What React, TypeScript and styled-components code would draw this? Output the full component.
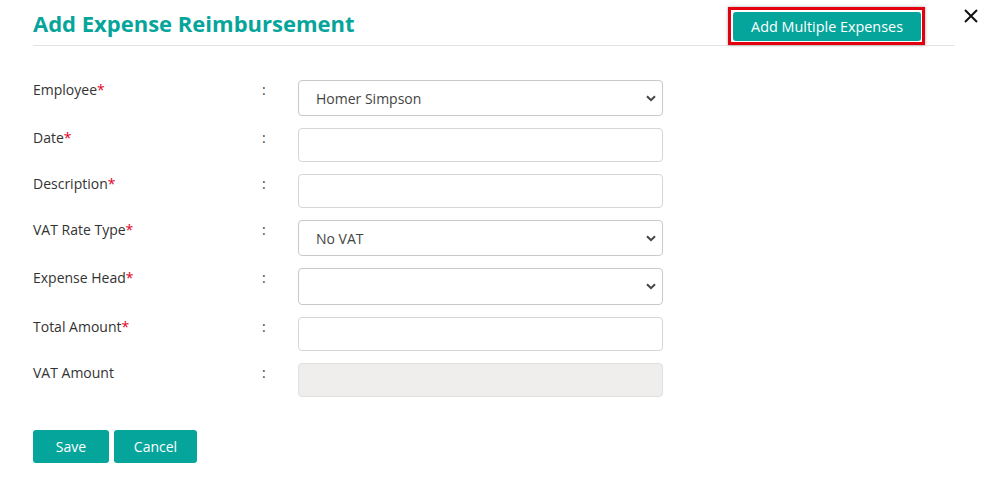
import * as React from "react";
import styled, { createGlobalStyle } from "styled-components";

const teal = "#06a59c";

const GlobalStyle = createGlobalStyle`
    body {
        margin: 0;
        background: #fff;
        font-family: "Open Sans", "Liberation Sans", sans-serif;
        color: #333;
    }
`

const CModal = styled.div`
    padding: 0 0 0 33px;
`

const CTop = styled.div`
    display: flex;
    align-items: flex-start;
`

const CHeader = styled.div`
    width: 922px;
    height: 46px;
    box-sizing: border-box;
    border-bottom: 1px solid #e3e3e3;
    display: flex;
    align-items: center;
    justify-content: space-between;

    h1 {
        margin: 0;
        font-size: 22px;
        font-weight: 700;
        color: ${teal};
        letter-spacing: 0;
    }
`

const CHighlight = styled.span`
    display: inline-flex;
    align-self: flex-end;
    margin-right: 30px;
    padding: 2px 1px 1px 2px;
    border: 3px solid #e3000f;
    box-shadow: 0 0 3px rgba(0, 0, 0, 0.35);
`

const CButton = styled.button<{ tall?: boolean; w?: number }>`
    height: ${(p) => (p.tall ? 33 : 29)}px;
    ${(p) => (p.w ? `width: ${p.w}px;` : "")}
    padding: 0 ${(p) => (p.w ? 0 : 18)}px;
    border: 0;
    border-radius: 3px;
    background: ${teal};
    color: #fff;
    font-family: "Open Sans", "Liberation Sans", sans-serif;
    font-size: ${(p) => (p.tall ? 14 : 14.4)}px;
    cursor: pointer;
`

const CClose = styled.button`
    margin: 6px 0 0 8px;
    padding: 0;
    border: 0;
    background: none;
    width: 16px;
    height: 20px;
    display: flex;
    align-items: center;
    justify-content: center;
`

const CForm = styled.div`
    padding-top: 34px;
    display: flex;
    flex-direction: column;
    gap: 12px;
`

const CRow = styled.div`
    display: flex;
    align-items: flex-start;
`

const CLabel = styled.label`
    width: 229px;
    font-size: 14px;
    line-height: 19px;
    color: #333;

    span {
        color: #e3001b;
    }
`

const CColon = styled.span`
    width: 36px;
    font-size: 14px;
    line-height: 19px;
    color: #444;
`

const fieldBase = `
    width: 365px;
    box-sizing: border-box;
    border: 1px solid #d6d6d6;
    border-radius: 4px;
    font-family: "Open Sans", "Liberation Sans", sans-serif;
    font-size: 14px;
    color: #444;
    background: #fff;
    outline: none;
`

const CInput = styled.input`
    ${fieldBase}
    height: 34px;
    padding: 0 17px;

    &:disabled {
        background: #efeeec;
        border-color: #e0e0de;
    }
`

const CSelectWrap = styled.div`
    position: relative;
    width: 365px;

    svg {
        position: absolute;
        right: 7px;
        top: 15px;
        pointer-events: none;
    }
`

const CSelect = styled.select<{ h: number }>`
    ${fieldBase}
    height: ${(p) => p.h}px;
    padding: 0 30px 0 17px;
    appearance: none;
    border-color: #c9c9c9;
`

const CActions = styled.div`
    display: flex;
    gap: 5px;
    padding-top: 33px;
`

const Chevron = () => <svg width="10" height="7" viewBox="0 0 10 7">
    <path d="M1 1.2 L5 5.2 L9 1.2" fill="none" stroke="#444" strokeWidth="2" />
</svg>

type Field = { label: string; required?: boolean; kind: "select" | "input" | "disabled"; value?: string; h?: number }

const fields: Field[] = [
    { label: "Employee", required: true, kind: "select", value: "Homer Simpson", h: 36 },
    { label: "Date", required: true, kind: "input" },
    { label: "Description", required: true, kind: "input" },
    { label: "VAT Rate Type", required: true, kind: "select", value: "No VAT", h: 36 },
    { label: "Expense Head", required: true, kind: "select", value: "", h: 37 },
    { label: "Total Amount", required: true, kind: "input" },
    { label: "VAT Amount", kind: "disabled" },
]

function App() {
    return <CModal>
        <GlobalStyle />
        <CTop>
            <CHeader>
                <h1>Add Expense Reimbursement</h1>
                <CHighlight>
                    <CButton>Add Multiple Expenses</CButton>
                </CHighlight>
            </CHeader>
            <CClose aria-label="Close">
                <svg width="14" height="14" viewBox="0 0 14 14">
                    <path d="M1 1 L13 13 M13 1 L1 13" stroke="#111" strokeWidth="2" />
                </svg>
            </CClose>
        </CTop>

        <CForm>
            {fields.map((f) => <CRow key={f.label}>
                <CLabel>{f.label}{f.required && <span>*</span>}</CLabel>
                <CColon>:</CColon>
                {f.kind === "select" ? <CSelectWrap>
                    <CSelect h={f.h ?? 36} defaultValue={f.value}>
                        <option value={f.value}>{f.value}</option>
                    </CSelect>
                    <Chevron />
                </CSelectWrap> : <CInput disabled={f.kind === "disabled"} />}
            </CRow>)}
        </CForm>

        <CActions>
            <CButton tall w={76}>Save</CButton>
            <CButton tall w={83}>Cancel</CButton>
        </CActions>
    </CModal>
}

export default App;
